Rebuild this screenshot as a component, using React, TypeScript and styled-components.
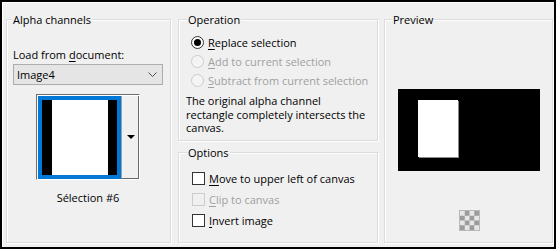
import React from "react";
import styled, { createGlobalStyle } from "styled-components";

const GlobalStyle = createGlobalStyle`
  html, body {
    margin: 0;
    background: #ffffff;
  }
  body {
    font-family: "Open Sans", "Noto Sans", sans-serif;
    font-size: 11px;
    color: #000000;
  }
`;

const Dialog = styled.div`
  box-sizing: border-box;
  width: 556px;
  height: 249px;
  border: 2px solid #000000;
  background: #f0f0f0;
  box-shadow: inset 1px 1px 0 #ffffff;
  display: flex;
  align-items: flex-start;
  padding: 17px 0 0 4px;
`;

const Column = styled.div<{ $gap?: number; $ml?: number }>`
  display: flex;
  flex-direction: column;
  gap: ${(p) => p.$gap ?? 0}px;
  margin-left: ${(p) => p.$ml ?? 0}px;
`;

const Group = styled.div<{ $w: number; $h: number; $ml?: number }>`
  position: relative;
  box-sizing: border-box;
  width: ${(p) => p.$w}px;
  height: ${(p) => p.$h}px;
  margin-left: ${(p) => p.$ml ?? 0}px;
  border: 1px solid #dcdcdc;
  box-shadow: 1px 1px 0 #ffffff, inset 1px 1px 0 #ffffff;
`;

const GroupTitle = styled.span<{ $inset: number }>`
  position: absolute;
  top: -8px;
  left: ${(p) => p.$inset}px;
  padding: 0 1px;
  line-height: 15px;
  background: #f0f0f0;
  white-space: nowrap;
`;

const AlphaBody = styled.div`
  display: flex;
  flex-direction: column;
  align-items: flex-start;
  padding: 27px 7px 0 6px;
`;

const Label = styled.div`
  line-height: 15px;
  white-space: nowrap;
`;

const Key = styled.span`
  text-decoration: underline;
  text-underline-offset: 2px;
`;

const Combo = styled.div`
  box-sizing: border-box;
  width: 150px;
  height: 21px;
  margin-top: 2px;
  border: 1px solid #adadad;
  background: #e5e5e5;
  display: flex;
  align-items: center;
  justify-content: space-between;
  padding: 0 5px 0 3px;
  line-height: 15px;
`;

const ThumbFrame = styled.div`
  align-self: center;
  display: flex;
  margin-top: 9px;
  border: 1px solid;
  border-color: #6d6d6d #ffffff #ffffff #6d6d6d;
  background: #ffffff;
  padding: 1px 0 0 1px;
`;

const Thumb = styled.div`
  box-sizing: border-box;
  width: 83px;
  height: 83px;
  border: 4px solid #0078d7;
  display: flex;
`;

const Fill = styled.div<{ $w?: number; $c: string }>`
  background: ${(p) => p.$c};
  ${(p) => (p.$w ? `width: ${p.$w}px;` : "flex: 1;")}
`;

const ThumbButton = styled.div`
  box-sizing: border-box;
  width: 18px;
  background: #f0f0f0;
  border-left: 1px solid #a0a0a0;
  border-right: 1px solid #696969;
  border-bottom: 1px solid #696969;
  display: flex;
  align-items: center;
  justify-content: center;
`;

const Caret = styled.span`
  width: 0;
  height: 0;
  border-left: 4px solid transparent;
  border-right: 4px solid transparent;
  border-top: 4px solid #000000;
  margin-left: 1px;
`;

const Caption = styled.div`
  align-self: center;
  margin-top: 10px;
  line-height: 15px;
`;

const OpBody = styled.div`
  display: flex;
  flex-direction: column;
  padding: 13px 0 0 0;
`;

const OptionRow = styled.div<{ $h: number; $disabled?: boolean }>`
  display: flex;
  align-items: center;
  gap: 4px;
  height: ${(p) => p.$h}px;
  padding-left: 12px;
  line-height: 15px;
  white-space: nowrap;
  color: ${(p) => (p.$disabled ? "#a0a0a0" : "#000000")};
`;

const Radio = styled.span<{ $checked?: boolean; $disabled?: boolean }>`
  box-sizing: border-box;
  width: 13px;
  height: 13px;
  border-radius: 50%;
  border: 1px solid ${(p) => (p.$disabled ? "#cccccc" : "#333333")};
  background: ${(p) => (p.$disabled ? "#f4f4f4" : "#ffffff")};
  display: flex;
  align-items: center;
  justify-content: center;
  &::after {
    content: "";
    display: ${(p) => (p.$checked ? "block" : "none")};
    width: 7px;
    height: 7px;
    border-radius: 50%;
    background: #000000;
  }
`;

const Check = styled.span<{ $disabled?: boolean }>`
  box-sizing: border-box;
  width: 13px;
  height: 13px;
  margin-left: 1px;
  border: 1px solid ${(p) => (p.$disabled ? "#cccccc" : "#333333")};
  background: ${(p) => (p.$disabled ? "#f0f0f0" : "#ffffff")};
`;

const Note = styled.p`
  margin: 4px 0 0 0;
  padding-left: 7px;
  line-height: 13.5px;
`;

const OptsBody = styled.div`
  display: flex;
  flex-direction: column;
  padding-top: 15px;
`;

const PreviewBody = styled.div`
  display: flex;
  flex-direction: column;
  align-items: center;
  padding-top: 69px;
`;

const Canvas = styled.div`
  width: 142px;
  height: 82px;
  background: #000000;
  padding: 11px 0 0 20px;
  box-sizing: border-box;
`;

const Selection = styled.div`
  width: 40px;
  height: 57px;
  background: #ffffff;
  box-shadow: 1px 1px 0 #8a8a8a;
`;

const Checker = styled.div`
  box-sizing: border-box;
  width: 21px;
  height: 21px;
  margin-top: 39px;
  margin-left: 1px;
  border: 1px solid #b9b9b9;
  background: repeating-conic-gradient(#9c9c9c 0 25%, #e6e6e6 0 50%) 0 0 / 9.5px 9.5px;
`;

const Chevron = () => (
  <svg width="9" height="6" viewBox="0 0 9 6">
    <polyline points="0.5,0.5 4.5,4.5 8.5,0.5" fill="none" stroke="#505050" strokeWidth="1" />
  </svg>
);

const App = () => {
  return (
    <>
      <GlobalStyle />
      <Dialog>
        <Group $w={165} $h={224}>
          <GroupTitle $inset={5}>Alpha channels</GroupTitle>
          <AlphaBody>
            <Label>
              Load from <Key>d</Key>ocument:
            </Label>
            <Combo>
              <span>Image4</span>
              <Chevron />
            </Combo>
            <ThumbFrame>
              <Thumb>
                <Fill $w={10} $c="#000000" />
                <Fill $c="#ffffff" />
                <Fill $w={9} $c="#000000" />
              </Thumb>
              <ThumbButton>
                <Caret />
              </ThumbButton>
            </ThumbFrame>
            <Caption>Sélection #6</Caption>
          </AlphaBody>
        </Group>

        <Column $gap={11} $ml={7}>
          <Group $w={200} $h={122}>
            <GroupTitle $inset={8}>Operation</GroupTitle>
            <OpBody>
              <OptionRow $h={19}>
                <Radio $checked />
                <span>
                  <Key>R</Key>eplace selection
                </span>
              </OptionRow>
              <OptionRow $h={19} $disabled>
                <Radio $disabled />
                <span>
                  <Key>A</Key>dd to current selection
                </span>
              </OptionRow>
              <OptionRow $h={19} $disabled>
                <Radio $disabled />
                <span>
                  <Key>S</Key>ubtract from current selection
                </span>
              </OptionRow>
              <Note>
                The original alpha channel
                <br />
                rectangle completely intersects the
                <br />
                canvas.
              </Note>
            </OpBody>
          </Group>
          <Group $w={200} $h={91}>
            <GroupTitle $inset={8}>Options</GroupTitle>
            <OptsBody>
              <OptionRow $h={21}>
                <Check />
                <span>
                  <Key>M</Key>ove to upper left of canvas
                </span>
              </OptionRow>
              <OptionRow $h={21} $disabled>
                <Check $disabled />
                <span>
                  <Key>C</Key>lip to canvas
                </span>
              </OptionRow>
              <OptionRow $h={21}>
                <Check />
                <span>
                  <Key>I</Key>nvert image
                </span>
              </OptionRow>
            </OptsBody>
          </Group>
        </Column>

        <Group $w={169} $h={224} $ml={6}>
          <GroupTitle $inset={7}>Preview</GroupTitle>
          <PreviewBody>
            <Canvas>
              <Selection />
            </Canvas>
            <Checker />
          </PreviewBody>
        </Group>
      </Dialog>
    </>
  );
};

export default App;
